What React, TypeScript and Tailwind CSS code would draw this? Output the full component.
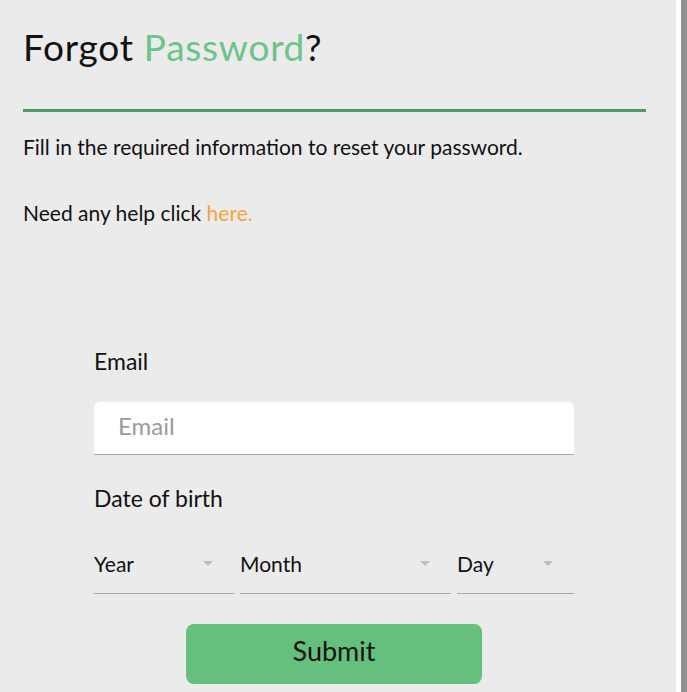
const font = { fontFamily: 'Lato, "Noto Sans", sans-serif' }

function Caret() {
  return (
    <svg className="w-3 h-2 text-[#bdbdbd]" viewBox="0 0 12 8" fill="currentColor">
      <path d="M1 1h10L6 6z" />
    </svg>
  )
}

function DateSelect({ label, className }: { label: string; className: string }) {
  return (
    <div
      className={`flex items-center justify-between h-[59px] border-b border-[#a8a8a8] pr-[20px] ${className}`}
    >
      <span className="text-[21px] text-[#111]">{label}</span>
      <Caret />
    </div>
  )
}

export default function App() {
  return (
    <div className="flex h-[692px] w-[687px] bg-white" style={font}>
      <div className="w-[676px] bg-[#ebebeb] px-[23px] pt-[24px]">
        <h1 className="text-[37px] leading-[46px] tracking-[0.02em] text-[#111]">
          Forgot <span className="text-[#6cc488]">Password</span>?
        </h1>
        <div className="mt-[39px] h-[3px] w-[623px] bg-[#509c67]" />
        <p className="mt-[22px] text-[21px] leading-[26px] text-[#111]">
          Fill in the required information to reset your password.
        </p>
        <p className="mt-[40px] text-[21px] leading-[26px] text-[#111]">
          Need any help click <a className="text-[#f5a33a]">here.</a>
        </p>

        <form className="ml-[71px] mt-[120px] w-[480px]">
          <label className="block text-[23px] leading-[30px] text-[#111]">Email</label>
          <input
            placeholder="Email"
            className="mt-[26px] block h-[53px] w-full rounded-t-[6px] border-b border-[#a8a8a8] bg-white px-[24px] pb-[6px] text-[24px] text-[#111] placeholder:text-[#9a9a9a] outline-none"
          />
          <label className="mt-[28px] block text-[23px] leading-[30px] text-[#111]">
            Date of birth
          </label>
          <div className="mt-[22px] flex gap-[6px]">
            <DateSelect label="Year" className="w-[140px]" />
            <DateSelect label="Month" className="w-[211px]" />
            <DateSelect label="Day" className="w-[117px]" />
          </div>
          <div className="flex justify-center">
            <button
              type="button"
              className="mt-[30px] h-[60px] w-[296px] rounded-[8px] bg-[#64c07c] pb-[6px] text-[27px] text-[#111]"
            >
              Submit
            </button>
          </div>
        </form>
      </div>
      <div className="w-[5px]" />
      <div className="w-[6px] bg-[#8f8f8f]" />
    </div>
  )
}
